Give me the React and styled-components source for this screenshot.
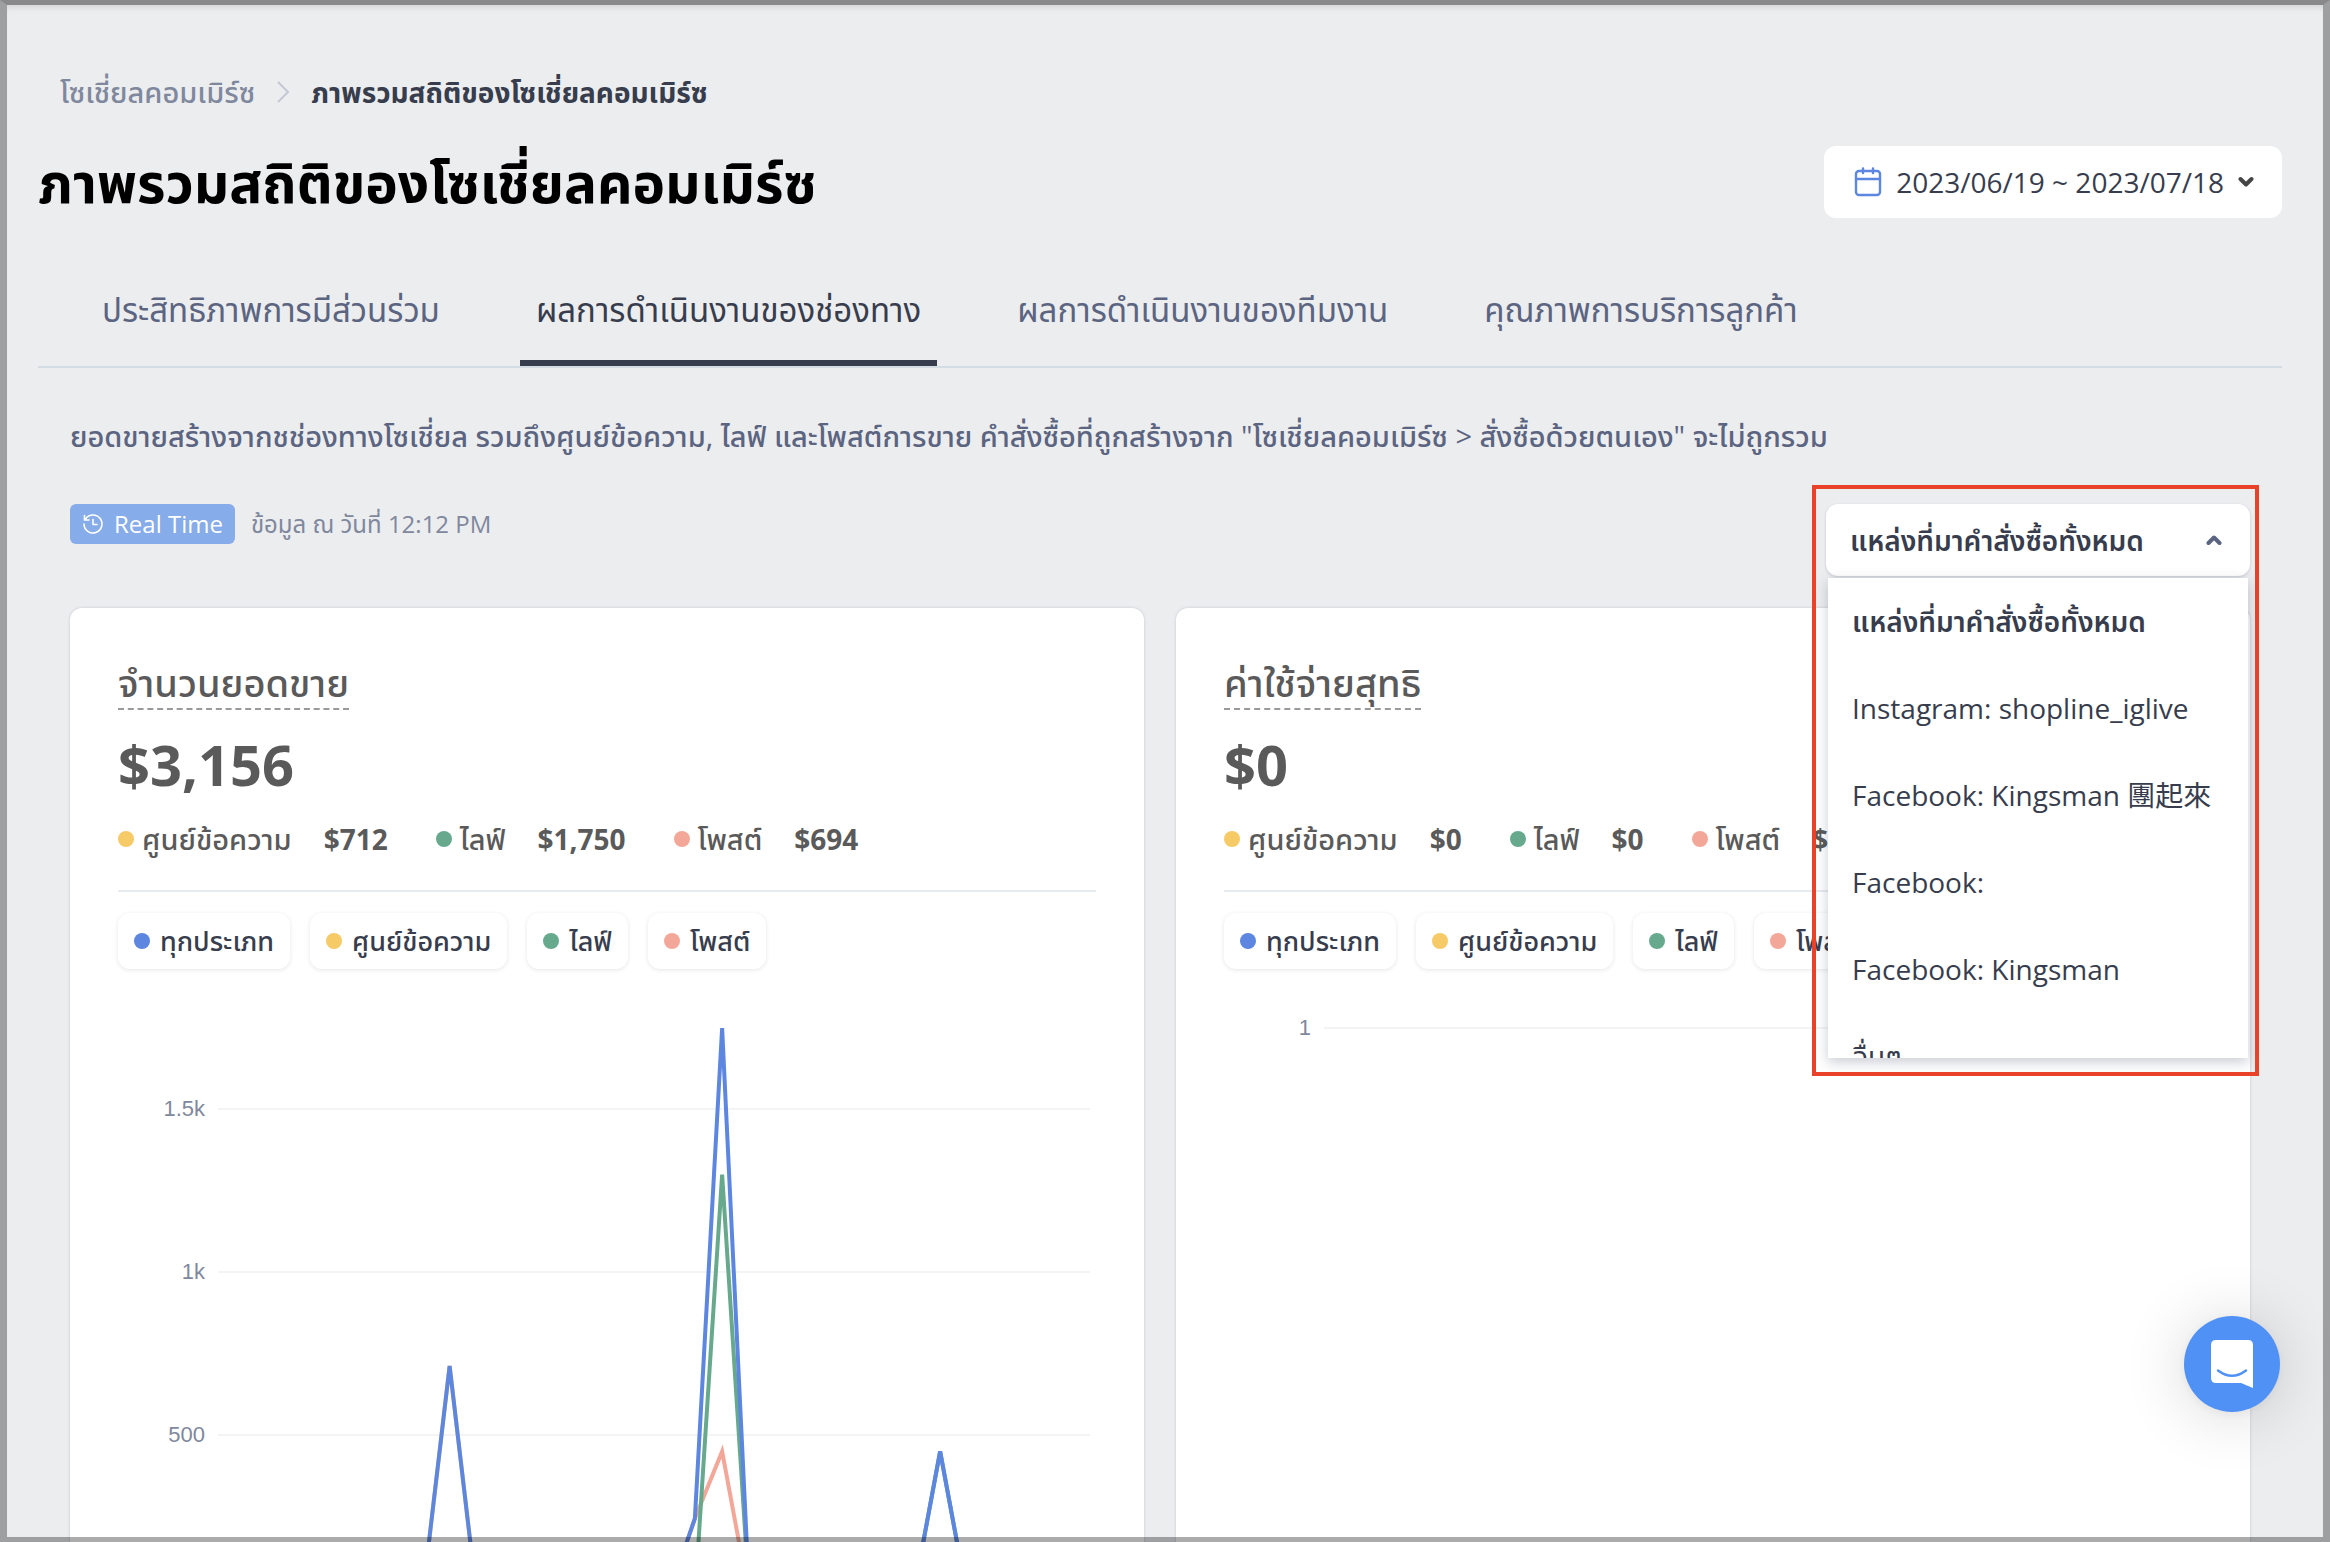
import React, { useState } from 'react';
import styled, { createGlobalStyle, css } from 'styled-components';

const GlobalStyle = createGlobalStyle`
*{
  box-sizing: border-box;
}
body{
  margin: 0;
  background: #ecedef;
  color: #373d4d;
  font-family: "Open Sans", "Noto Sans Thai", "Noto Sans CJK TC", sans-serif;
  font-size: 28px;
  line-height: 40px;
}
button{
  font: inherit;
  color: inherit;
  border: 0;
  background: transparent;
  padding: 0;
  cursor: pointer;
}
h1, h2, p, ul{
  margin: 0;
  padding: 0;
}
ul{
  list-style: none;
}
`;

const colors = {
  all: '#5c86e0',
  message: '#f6ca66',
  live: '#67a98d',
  post: '#f3a799'
};

const Page = styled.div`
  height: 100vh;
  overflow: hidden;
  padding: 72px 48px 0 38px;
`;

const WindowEdge = styled.div`
  position: fixed;
  inset: 0;
  z-index: 20;
  pointer-events: none;
  border: solid rgba(0,0,0,0.33);
  border-width: 5px 7px;
  border-top-color: rgba(0,0,0,0.42);
  box-shadow: inset 0 6px 6px -4px rgba(0,0,0,0.12);
`;

const Breadcrumb = styled.nav`
  display: flex;
  align-items: center;
  padding-left: 22px;
  font-size: 29px;
  font-weight: 500;
  a{
    color: #7f889d;
    text-decoration: none;
  }
  svg{
    margin: 0 20px;
  }
  span{
    font-size: 28px;
    font-weight: 700;
  }
`;

const TitleRow = styled.header`
  display: flex;
  justify-content: space-between;
  align-items: center;
  margin-top: 34px;
  h1{
    color: #000;
    font-size: 55px;
    line-height: 72px;
  }
`;

const DateButton = styled.button`
  display: flex;
  align-items: center;
  height: 72px;
  padding: 0 28px 0 30px;
  border-radius: 12px;
  background: #fff;
  svg:first-child{
    margin-right: 14px;
  }
  svg:last-child{
    margin-left: 14px;
  }
`;

const Tabs = styled.div`
  display: flex;
  gap: 64px;
  margin-top: 52px;
  padding-left: 48px;
  border-bottom: 2px solid #d5dde4;
`;

const Tab = styled.button`
  height: 96px;
  padding: 0 16px 10px;
  font-size: 33px;
  color: #5b6480;
  border-bottom: 6px solid transparent;
  ${props => props.$active && css`
    color: #373d4d;
    border-color: #373d4d;
  `}
`;

const Content = styled.main`
  padding: 48px 32px 0;
`;

const Description = styled.p`
  color: #5b6480;
  font-size: 29px;
  font-weight: 500;
`;

const FilterRow = styled.div`
  display: flex;
  justify-content: space-between;
  align-items: flex-start;
  margin-top: 48px;
`;

const Updated = styled.div`
  display: flex;
  align-items: center;
  gap: 16px;
  color: #7f889d;
  font-size: 24px;
`;

const Badge = styled.span`
  display: flex;
  align-items: center;
  gap: 10px;
  padding: 0 12px;
  height: 40px;
  border-radius: 6px;
  background: #86ace9;
  color: #fff;
`;

const Dropdown = styled.div`
  position: relative;
  width: 424px;
  z-index: 5;
`;

const DropdownButton = styled.button`
  display: flex;
  justify-content: space-between;
  align-items: center;
  width: 100%;
  height: 72px;
  padding: 0 28px 0 24px;
  border-radius: 12px;
  background: #fff;
  box-shadow: 0 1px 3px rgba(40,50,80,0.2);
  font-weight: 600;
`;

const Menu = styled.ul`
  position: absolute;
  top: 74px;
  left: 2px;
  right: 2px;
  height: 480px;
  overflow: hidden;
  background: #fff;
  box-shadow: 0 4px 12px rgba(40,50,80,0.25);
`;

const Option = styled.li`
  height: 87px;
  padding: 23px 24px;
  white-space: nowrap;
  cursor: pointer;
  font-weight: ${props => props.$selected ? 600 : 400};
`;

/* callout drawn round the whole open dropdown */
const Callout = styled.div`
  position: absolute;
  top: -19px;
  left: -14px;
  right: -9px;
  height: 591px;
  border: 4px solid #ea4228;
  pointer-events: none;
`;

const Cards = styled.div`
  display: grid;
  grid-template-columns: 1fr 1fr;
  gap: 32px;
  margin-top: 32px;
`;

const Card = styled.section`
  padding: 48px;
  border-radius: 12px;
  background: #fff;
  box-shadow: 0 0 3px rgba(40,50,80,0.2);
  color: #5a5a5a;
  h2{
    width: fit-content;
    font-size: 38px;
    line-height: 52px;
    font-weight: 500;
    border-bottom: 2px dashed #999;
  }
`;

const Total = styled.div`
  margin-top: 16px;
  font-size: 56px;
  line-height: 76px;
  font-weight: 700;
`;

const Stats = styled.div`
  display: flex;
  gap: 48px;
  margin-top: 17px;
  padding-bottom: 31px;
  border-bottom: 2px solid #e6ebf0;
  font-size: 29px;
  font-weight: 500;
  white-space: nowrap;
`;

const Stat = styled.div`
  display: flex;
  align-items: center;
  gap: 8px;
  strong{
    margin-left: 24px;
    font-size: 28px;
  }
`;

const Dot = styled.i`
  flex: none;
  width: 16px;
  height: 16px;
  border-radius: 50%;
  background: ${props => colors[props.$type]};
`;

const Pills = styled.div`
  display: flex;
  gap: 20px;
  margin-top: 21px;
`;

const Pill = styled.button`
  display: flex;
  align-items: center;
  gap: 10px;
  height: 56px;
  padding: 0 16px;
  border-radius: 12px;
  background: #fff;
  box-shadow: 0 1px 4px rgba(40,50,80,0.12);
  color: #373d4d;
  font-size: 27px;
  font-weight: 500;
  white-space: nowrap;
`;

const ChartSvg = styled.svg`
  display: block;
  width: 100%;
  margin-top: 31px;
  text{
    font-family: "Liberation Sans", Arial, sans-serif;
    font-size: 22px;
    fill: #7f889d;
    text-anchor: end;
  }
  line{
    stroke: #f4f4f5;
    stroke-width: 2;
  }
  polyline{
    fill: none;
    stroke-width: 4;
  }
`;

const ChatButton = styled.button`
  position: fixed;
  right: 50px;
  bottom: 130px;
  z-index: 10;
  width: 96px;
  height: 96px;
  border-radius: 50%;
  background: #5091f5;
  box-shadow: 0 2px 12px rgba(0,0,0,0.06), 0 4px 64px rgba(0,0,0,0.16);
  svg{
    display: block;
  }
`;

const labels = {
  all: 'ทุกประเภท',
  message: 'ศูนย์ข้อความ',
  live: 'ไลฟ์',
  post: 'โพสต์'
};

const tabs = [
  'ประสิทธิภาพการมีส่วนร่วม',
  'ผลการดำเนินงานของช่องทาง',
  'ผลการดำเนินงานของทีมงาน',
  'คุณภาพการบริการลูกค้า'
];

const sources = [
  'แหล่งที่มาคำสั่งซื้อทั้งหมด',
  'Instagram: shopline_iglive',
  'Facebook: Kingsman 團起來',
  'Facebook:',
  'Facebook: Kingsman',
  'อื่นๆ'
];

// day index -> value, every other day is 0
const sales = [
  { type: 'message', points: { 8: 712 } },
  { type: 'post', points: { 17: 244, 18: 450 } },
  { type: 'live', points: { 18: 1300, 26: 450 } },
  { type: 'all', points: { 8: 712, 17: 244, 18: 1750, 26: 450 } }
];

const DAYS = 32;
const BASE = 598;

const toPoints = (points, max) => {
  const step = 872 / DAYS;
  return Array.from({ length: DAYS }, (_, i) => {
    const y = BASE - (points[i] || 0) * (570 / max);
    return `${100 + (i + 0.5) * step},${y}`;
  }).join(' ');
};

const Chart = ({ title, max, ticks, series }) => (
  <ChartSvg viewBox="0 0 978 640" role="img" aria-label={title}>
    {ticks.map(t => {
      const y = Math.round(BASE - t.value * (570 / max));
      return (
        <g key={t.label}>
          <line x1="100" x2="972" y1={y} y2={y} />
          <text x="87" y={y + 7}>{t.label}</text>
        </g>
      );
    })}
    {series.map(s => (
      <polyline key={s.type} points={toPoints(s.points, max)} stroke={colors[s.type]} />
    ))}
  </ChartSvg>
);

const StatCard = ({ title, total, stats, ...chart }) => (
  <Card>
    <h2>{title}</h2>
    <Total>{total}</Total>
    <Stats>
      {stats.map(([type, value]) => (
        <Stat key={type}>
          <Dot $type={type} />
          {labels[type]}
          <strong>{value}</strong>
        </Stat>
      ))}
    </Stats>
    <Pills>
      {Object.keys(labels).map(type => (
        <Pill key={type} type="button"><Dot $type={type} />{labels[type]}</Pill>
      ))}
    </Pills>
    <Chart title={title} {...chart} />
  </Card>
);

const Chevron = ({ up, color }) => (
  <svg width="16" height="12" viewBox="0 0 16 12" fill="none" stroke={color} strokeWidth="4" strokeLinecap="round" strokeLinejoin="round">
    <path d={up ? 'M2.5 9L8 3.5L13.5 9' : 'M2.5 3L8 8.5L13.5 3'} />
  </svg>
);

const CalendarIcon = () => (
  <svg width="28" height="30" viewBox="0 0 28 30" fill="none" stroke="#5c86e0" strokeWidth="2.4" strokeLinecap="round">
    <rect x="2" y="4" width="24" height="24" rx="3" />
    <path d="M2 12H26M9 1.500V6M19 1.500V6" />
  </svg>
);

const HistoryIcon = () => (
  <svg width="22" height="22" viewBox="0 0 22 22" fill="none" stroke="#fff" strokeWidth="1.6" strokeLinecap="round" strokeLinejoin="round">
    <path d="M3.5 6A9 9 0 1 1 2 11" />
    <path d="M2.5 2.5V7H7M11 6.5V11.5H15" />
  </svg>
);

const App = () => {
  const [tab, setTab] = useState(1);
  const [open, setOpen] = useState(true);
  const [source, setSource] = useState(0);

  return (
    <Page>
      <GlobalStyle />
      <Breadcrumb>
        <a href="#social">โซเชี่ยลคอมเมิร์ซ</a>
        <svg width="16" height="22" viewBox="0 0 16 22" fill="none" stroke="#c3c8d3" strokeWidth="2">
          <path d="M3 1L13 11L3 21" />
        </svg>
        <span>ภาพรวมสถิติของโซเชี่ยลคอมเมิร์ซ</span>
      </Breadcrumb>
      <TitleRow>
        <h1>ภาพรวมสถิติของโซเชี่ยลคอมเมิร์ซ</h1>
        <DateButton type="button">
          <CalendarIcon />
          2023/06/19 ~ 2023/07/18
          <Chevron color="#444" />
        </DateButton>
      </TitleRow>
      <Tabs role="tablist">
        {tabs.map((name, i) => (
          <Tab key={name} type="button" role="tab" aria-selected={tab === i} $active={tab === i} onClick={() => setTab(i)}>{name}</Tab>
        ))}
      </Tabs>
      <Content>
        <Description>
          ยอดขายสร้างจากชช่องทางโซเชี่ยล รวมถึงศูนย์ข้อความ, ไลฟ์ และโพสต์การขาย คำสั่งซื้อที่ถูกสร้างจาก "โซเชี่ยลคอมเมิร์ซ &gt; สั่งซื้อด้วยตนเอง" จะไม่ถูกรวม
        </Description>
        <FilterRow>
          <Updated>
            <Badge><HistoryIcon />Real Time</Badge>
            ข้อมูล ณ วันที่ 12:12 PM
          </Updated>
          <Dropdown>
            <DropdownButton type="button" aria-haspopup="listbox" aria-expanded={open} onClick={() => setOpen(!open)}>
              {sources[source]}
              <Chevron up={open} color="#5b6480" />
            </DropdownButton>
            {open && (
              <Menu role="listbox">
                {sources.map((name, i) => (
                  <Option key={name} role="option" aria-selected={source === i} $selected={source === i} onClick={() => setSource(i)}>{name}</Option>
                ))}
              </Menu>
            )}
            {open && <Callout />}
          </Dropdown>
        </FilterRow>
        <Cards>
          <StatCard
            title="จำนวนยอดขาย"
            total="$3,156"
            stats={[['message', '$712'], ['live', '$1,750'], ['post', '$694']]}
            max={1750}
            ticks={[{ value: 500, label: '500' }, { value: 1000, label: '1k' }, { value: 1500, label: '1.5k' }]}
            series={sales}
          />
          <StatCard
            title="ค่าใช้จ่ายสุทธิ"
            total="$0"
            stats={[['message', '$0'], ['live', '$0'], ['post', '$0']]}
            max={1}
            ticks={[{ value: 1, label: '1' }]}
            series={[]}
          />
        </Cards>
      </Content>
      <ChatButton type="button" aria-label="Chat">
        <svg width="96" height="96" viewBox="0 0 96 96">
          <path d="M32 24H64Q69 24 69 29V72L57 67H32Q27 67 27 62V29Q27 24 32 24Z" fill="#fff" />
          <path d="M34 54.500Q48 65 62 54.500" fill="none" stroke="#5091f5" strokeWidth="2.500" strokeLinecap="round" />
        </svg>
      </ChatButton>
      <WindowEdge />
    </Page>
  );
};

export default App;
